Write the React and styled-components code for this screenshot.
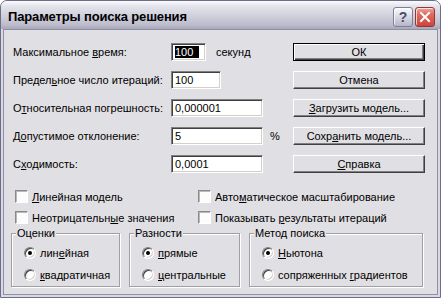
import React from "react"
import styled, { createGlobalStyle } from "styled-components"

const Global = createGlobalStyle`
    html, body {
        margin: 0;
        padding: 0;
        background: #ffffff;
    }
    body {
        font-family: "Liberation Sans", Arial, sans-serif;
        font-size: 11px;
        color: #000;
    }
`

const Window = styled.div`
    width: 441px;
    height: 298px;
    box-sizing: border-box;
    border: 1px solid #6d6d87;
    border-radius: 7px 7px 0 0;
    background: #d9d9e4;
    display: flex;
    flex-direction: column;
    overflow: hidden;
`

const TitleBar = styled.div`
    height: 28px;
    flex: none;
    display: flex;
    align-items: center;
    padding: 0 5px 0 7px;
    background: linear-gradient(#fbfbfd 0%, #e4e4ec 18%, #cfcfdb 55%, #bcbccb 85%, #a8a8ba 100%);
`

const Title = styled.div`
    flex: 1;
    padding-top: 3px;
    font-size: 13px;
    font-weight: bold;
    color: #000;
    letter-spacing: -0.15px;
`

const TitleButton = styled.div`
    width: 20px;
    height: 20px;
    box-sizing: border-box;
    margin-left: 2px;
    margin-top: 4px;
    border-radius: 3px;
    display: flex;
    align-items: center;
    justify-content: center;
    border: 1px solid ${p => p.$close ? "#8a3a3a" : "#7e7e98"};
    background: ${p => p.$close
        ? "linear-gradient(#f0a49c 0%, #e06a60 35%, #cf443a 100%)"
        : "linear-gradient(#fbfbfd 0%, #dcdce6 45%, #b6b6c8 100%)"};
    box-shadow: inset 1px 1px 0 rgba(255, 255, 255, 0.7);
    color: #4a4a6c;
    font-weight: bold;
    font-size: 14px;
`

const Frame = styled.div`
    flex: 1;
    display: flex;
    padding: 0 2px 2px;
`

const Client = styled.div`
    flex: 1;
    border: 1px solid #8f8fa6;
    background: #e0dfe3;
    padding: 13px 12px 0 7px;
    display: flex;
    flex-direction: column;
`

const Top = styled.div`
    display: flex;
    justify-content: space-between;
`

const Fields = styled.div`
    display: flex;
    flex-direction: column;
    gap: 10px;
    padding-left: 2px;
`

const FieldRow = styled.div`
    display: flex;
    align-items: center;
    height: 18px;
`

const Label = styled.div`
    width: 158px;
`

const TextBox = styled.div`
    width: ${p => p.$w}px;
    height: 18px;
    box-sizing: border-box;
    background: #fff;
    border-style: solid;
    border-width: 1px;
    border-color: #808080 #ffffff #ffffff #808080;
    box-shadow: inset 1px 1px 0 #404040, inset -1px -1px 0 #d4d0c8;
    padding: 0 3px;
    display: flex;
    align-items: center;
`

const Selected = styled.span`
    background: #000;
    color: #fff;
    padding-right: 6px;
`

const Suffix = styled.div`
    margin-left: ${p => p.$gap}px;
`

const Buttons = styled.div`
    display: flex;
    flex-direction: column;
    gap: 10px;
`

const Button = styled.div`
    width: 132px;
    height: 18px;
    box-sizing: border-box;
    display: flex;
    align-items: center;
    justify-content: center;
    background: #e0dfe3;
    border-style: solid;
    border-width: 1px;
    border-color: ${p => p.$default ? "#000" : "#ffffff #404040 #404040 #ffffff"};
    box-shadow: ${p => p.$default
        ? "inset 1px 1px 0 #ffffff, inset -1px -1px 0 #404040, inset -2px -2px 0 #808080"
        : "inset -1px -1px 0 #808080"};
`

const Checks = styled.div`
    display: grid;
    grid-template-columns: 183px auto;
    row-gap: 8px;
    margin-top: 17px;
    padding-left: 4px;
`

const CheckRow = styled.div`
    display: flex;
    align-items: center;
    height: 13px;
    gap: 4px;
`

const CheckBox = styled.span`
    width: 13px;
    height: 13px;
    box-sizing: border-box;
    background: #fcfcfc;
    border-style: solid;
    border-width: 1px;
    border-color: #8a8a8a #ffffff #ffffff #8a8a8a;
    box-shadow: inset 1px 1px 0 #b8b8b8;
`

const Groups = styled.div`
    display: flex;
    gap: 9px;
    margin-top: 9px;
`

const Group = styled.div`
    position: relative;
    width: ${p => p.$w}px;
    height: 54px;
    box-sizing: border-box;
    border: 1px solid #a0a0a4;
    box-shadow: 1px 1px 0 #ffffff, inset 1px 1px 0 #ffffff;
    padding: 12px 0 0 12px;
    display: flex;
    flex-direction: column;
    gap: 9px;
`

const Legend = styled.div`
    position: absolute;
    top: -7px;
    left: 4px;
    padding: 0 1px;
    line-height: 13px;
    background: #e0dfe3;
`

const RadioRow = styled.div`
    display: flex;
    align-items: center;
    height: 13px;
    gap: 4px;
`

const Radio = styled.span`
    position: relative;
    width: 12px;
    height: 12px;
    box-sizing: border-box;
    border-radius: 50%;
    background: #fff;
    border-style: solid;
    border-width: 1px;
    border-color: #808080 #ffffff #ffffff #808080;
    box-shadow: inset 1px 1px 0 #404040, inset -1px -1px 0 #d4d0c8;

    &::after {
        content: "";
        display: ${p => p.$on ? "block" : "none"};
        position: absolute;
        left: 3px;
        top: 3px;
        width: 4px;
        height: 4px;
        border-radius: 50%;
        background: #000;
    }
`

const Key = styled.u`
    text-decoration: underline;
    text-underline-offset: 1px;
`

const Check = ({ children }) =>
    <CheckRow>
        <CheckBox />
        <span>{children}</span>
    </CheckRow>

const Option = ({ on, children }) =>
    <RadioRow>
        <Radio $on={on} />
        <span>{children}</span>
    </RadioRow>

const App = () =>
    <>
        <Global />
        <Window>
            <TitleBar>
                <Title>Параметры поиска решения</Title>
                <TitleButton>?</TitleButton>
                <TitleButton $close>
                    <svg width="12" height="12" viewBox="0 0 12 12">
                        <path d="M2 2 L10 10 M10 2 L2 10" stroke="#fff" strokeWidth="2" strokeLinecap="square" />
                    </svg>
                </TitleButton>
            </TitleBar>
            <Frame>
                <Client>
                    <Top>
                        <Fields>
                            <FieldRow>
                                <Label>Максимальное <Key>в</Key>ремя:</Label>
                                <TextBox $w={35}><Selected>100</Selected></TextBox>
                                <Suffix $gap={10}>секунд</Suffix>
                            </FieldRow>
                            <FieldRow>
                                <Label>Предел<Key>ь</Key>ное число итераций:</Label>
                                <TextBox $w={50}>100</TextBox>
                            </FieldRow>
                            <FieldRow>
                                <Label>О<Key>т</Key>носительная погрешность:</Label>
                                <TextBox $w={92}>0,000001</TextBox>
                            </FieldRow>
                            <FieldRow>
                                <Label>Д<Key>о</Key>пустимое отклонение:</Label>
                                <TextBox $w={92}>5</TextBox>
                                <Suffix $gap={7}>%</Suffix>
                            </FieldRow>
                            <FieldRow>
                                <Label>С<Key>х</Key>одимость:</Label>
                                <TextBox $w={92}>0,0001</TextBox>
                            </FieldRow>
                        </Fields>
                        <Buttons>
                            <Button $default>ОК</Button>
                            <Button>Отмена</Button>
                            <Button><span><Key>З</Key>агрузить модель...</span></Button>
                            <Button><span>Сохр<Key>а</Key>нить модель...</span></Button>
                            <Button><span><Key>С</Key>правка</span></Button>
                        </Buttons>
                    </Top>
                    <Checks>
                        <Check><Key>Л</Key>инейная модель</Check>
                        <Check>Авто<Key>м</Key>атическое масштабирование</Check>
                        <Check>Неотрицательн<Key>ы</Key>е значения</Check>
                        <Check>Показывать <Key>р</Key>езультаты итераций</Check>
                    </Checks>
                    <Groups>
                        <Group $w={109}>
                            <Legend>Оценки</Legend>
                            <Option on>лин<Key>е</Key>йная</Option>
                            <Option><Key>к</Key>вадратичная</Option>
                        </Group>
                        <Group $w={111}>
                            <Legend>Разности</Legend>
                            <Option on><Key>п</Key>рямые</Option>
                            <Option><Key>ц</Key>ентральные</Option>
                        </Group>
                        <Group $w={174}>
                            <Legend>Метод поиска</Legend>
                            <Option on><Key>Н</Key>ьютона</Option>
                            <Option>сопряженных <Key>г</Key>радиентов</Option>
                        </Group>
                    </Groups>
                </Client>
            </Frame>
        </Window>
    </>

export default App
